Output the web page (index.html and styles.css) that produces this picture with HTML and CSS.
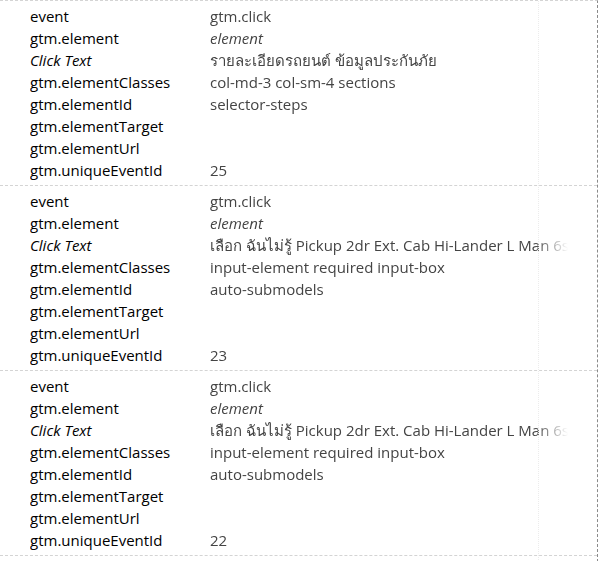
FILE: index.html
```html
<!DOCTYPE html>
<html lang="en">
<head>
    <meta charset="UTF-8">
    <title>Data Layer Events</title>
    <link rel="stylesheet" href="styles.css">
</head>
<body>
    <div class="events">
        <div class="event">
            <div class="key">event</div><div class="val">gtm.click</div>
            <div class="key">gtm.element</div><div class="val"><em>element</em></div>
            <div class="key"><em>Click Text</em></div><div class="val">รายละเอียดรถยนต์ ข้อมูลประกันภัย</div>
            <div class="key">gtm.elementClasses</div><div class="val">col-md-3 col-sm-4 sections</div>
            <div class="key">gtm.elementId</div><div class="val">selector-steps</div>
            <div class="key">gtm.elementTarget</div><div class="val"></div>
            <div class="key">gtm.elementUrl</div><div class="val"></div>
            <div class="key">gtm.uniqueEventId</div><div class="val">25</div>
        </div>
        <div class="event">
            <div class="key">event</div><div class="val">gtm.click</div>
            <div class="key">gtm.element</div><div class="val"><em>element</em></div>
            <div class="key"><em>Click Text</em></div><div class="val">เลือก ฉันไม่รู้ Pickup 2dr Ext. Cab Hi-Lander L Man 6s</div>
            <div class="key">gtm.elementClasses</div><div class="val">input-element required input-box</div>
            <div class="key">gtm.elementId</div><div class="val">auto-submodels</div>
            <div class="key">gtm.elementTarget</div><div class="val"></div>
            <div class="key">gtm.elementUrl</div><div class="val"></div>
            <div class="key">gtm.uniqueEventId</div><div class="val">23</div>
        </div>
        <div class="event">
            <div class="key">event</div><div class="val">gtm.click</div>
            <div class="key">gtm.element</div><div class="val"><em>element</em></div>
            <div class="key"><em>Click Text</em></div><div class="val">เลือก ฉันไม่รู้ Pickup 2dr Ext. Cab Hi-Lander L Man 6s</div>
            <div class="key">gtm.elementClasses</div><div class="val">input-element required input-box</div>
            <div class="key">gtm.elementId</div><div class="val">auto-submodels</div>
            <div class="key">gtm.elementTarget</div><div class="val"></div>
            <div class="key">gtm.elementUrl</div><div class="val"></div>
            <div class="key">gtm.uniqueEventId</div><div class="val">22</div>
        </div>
    </div>
</body>
</html>
```

FILE: styles.css
```css
body {
    margin: 0;
    font-family: "Open Sans", "Noto Sans", sans-serif;
    font-size: 15px;
    background: #fff;
}
.events {
    position: relative;
    width: 597px;
    min-height: 561px;
    border-top: 1px dashed #d4d4d4;
    border-right: 1px dashed #8a8a8a;
}
.events::after {
    content: "";
    position: absolute;
    top: 0;
    bottom: 0;
    left: 538px;
    border-left: 1px dotted #ececec;
}
.event {
    display: grid;
    grid-template-columns: 180px 380px;
    grid-auto-rows: 22px;
    padding: 4px 0 4px 30px;
    border-bottom: 1px dashed #d4d4d4;
}
.key, .val {
    line-height: 22px;
    white-space: nowrap;
    overflow: hidden;
}
.key {
    color: #000;
}
.val {
    color: #444;
    -webkit-mask-image: linear-gradient(to right, #000 325px, transparent 358px);
    mask-image: linear-gradient(to right, #000 325px, transparent 358px);
}
```
